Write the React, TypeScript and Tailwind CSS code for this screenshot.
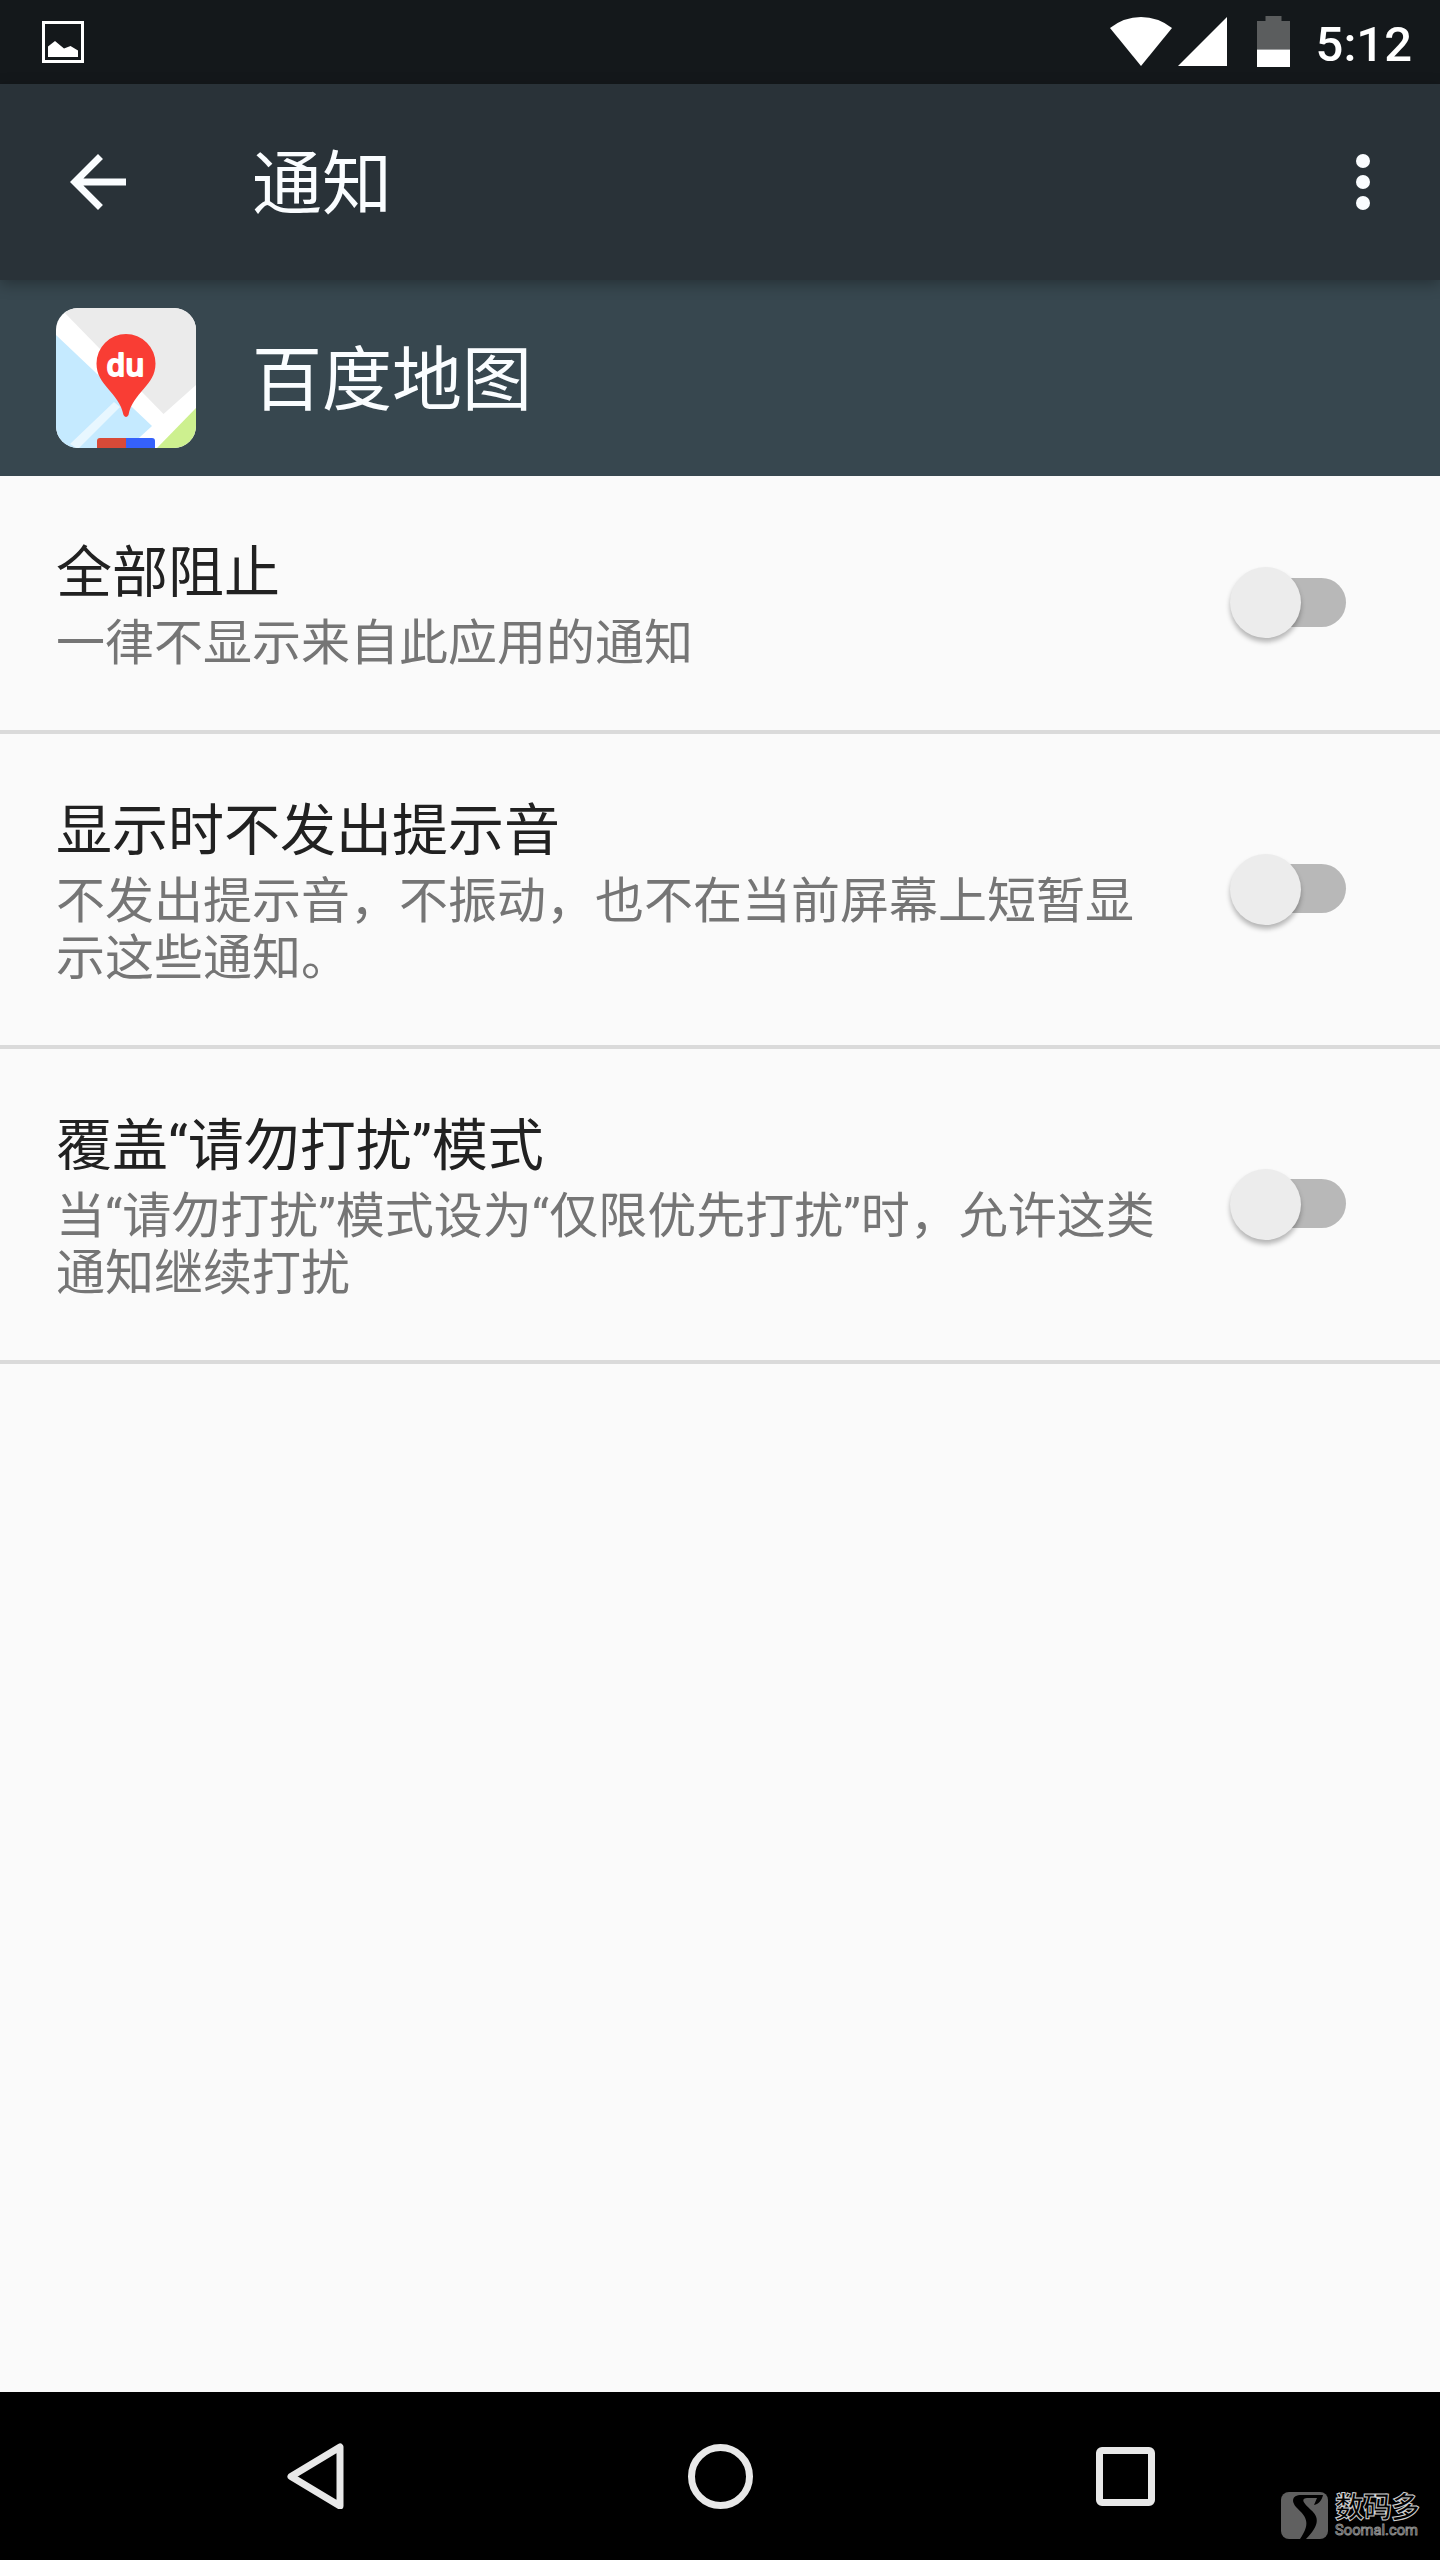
import React, { useState } from "react";

interface Setting {
  id: string;
  title: string;
  summary: string;
}

const settings: Setting[] = [{
  id: "block",
  title: "全部阻止",
  summary: "一律不显示来自此应用的通知"
}, {
  id: "silent",
  title: "显示时不发出提示音",
  summary: "不发出提示音，不振动，也不在当前屏幕上短暂显示这些通知。"
}, {
  id: "override",
  title: "覆盖“请勿打扰”模式",
  summary: "当“请勿打扰”模式设为“仅限优先打扰”时，允许这类通知继续打扰"
}];

const StatusBar: React.FC = () => {
  return <div className="flex h-[84px] shrink-0 items-start justify-between bg-[#14181b] pl-[42px] pr-7">
      <svg className="mt-[21px] h-[42px] w-[42px]" viewBox="0 0 42 42">
        <rect x="1.5" y="1.5" width="39" height="39" fill="none" stroke="#fff" strokeWidth="3" />
        <path d="M6 25.5L13 20L22 27.5L28.5 25L36 29.5V36H6z" fill="#fff" />
      </svg>
      <div className="flex items-start">
        <svg className="mt-[17px] h-[49px] w-[62px]" viewBox="0 0 62 49">
          <path d="M0 11Q14 0 31 0T62 11L31 49z" fill="#fff" />
        </svg>
        <svg className="ml-[6px] mt-[17px] h-[49px] w-[49px]" viewBox="0 0 49 49">
          <path d="M49 0V49H0z" fill="#fff" />
        </svg>
        <svg className="ml-[30px] mt-[16px] h-[51px] w-[33px]" viewBox="0 0 33 51">
          <path d="M8.5 0H24.5V5H33V33.5H0V5H8.5z" fill="#5b5d5e" />
          <rect y="33.5" width="33" height="17.5" fill="#fff" />
        </svg>
        <span className="ml-[26px] mt-[17px] text-[49px] font-medium leading-[56px] text-white">5:12</span>
      </div>
    </div>;
};

const Toolbar: React.FC = () => {
  return <header className="relative z-10 flex h-[196px] shrink-0 items-center bg-[#293238] pl-14 pr-[35px] shadow-[0_4px_14px_rgba(0,0,0,0.3)]">
      <svg className="h-[84px] w-[84px]" viewBox="0 0 24 24" fill="#fafdff">
        <path d="M20 11H7.83l5.59-5.59L12 4l-8 8 8 8 1.41-1.41L7.83 13H20v-2z" />
      </svg>
      <h1 className="ml-[112px] flex-1 pt-[6px] text-[70px] leading-[84px] text-[#fafdff]">通知</h1>
      <svg className="h-[84px] w-[84px]" viewBox="0 0 24 24" fill="#fafdff">
        <circle cx="12" cy="6" r="2" />
        <circle cx="12" cy="12" r="2" />
        <circle cx="12" cy="18" r="2" />
      </svg>
    </header>;
};

const MapIcon: React.FC = () => {
  return <svg className="h-[140px] w-[140px] rounded-[22px]" viewBox="0 0 140 140">
      <rect width="140" height="140" fill="#fff" />
      <path d="M4 0H140V77L107.5 106z" fill="#ebebeb" />
      <path d="M0 27L96 118L72 140H0z" fill="#c5eaff" />
      <path d="M58 94L14 136L22 141L64 99z" fill="#e8f7ff" />
      <path d="M140 100V140H101z" fill="#cdf08f" />
      <path d="M41 140V133Q41 130 44 130H70V140z" fill="#d84a38" />
      <path d="M70 130H96Q99 130 99 133V140H70z" fill="#3561fb" />
      <path d="M70 26A29.5 29.5 0 0 1 99.5 55.5C99.5 78 77 84 72.5 107Q70 111 67.5 107C63 84 40.5 78 40.5 55.5A29.5 29.5 0 0 1 70 26z" fill="#f93d34" />
      <text x="69.5" y="67.5" textAnchor="middle" fontSize="31" fontWeight="600" fill="#fff" stroke="#fff" strokeWidth="1.8" strokeLinejoin="round" fontFamily="Open Sans, sans-serif" textLength="38" lengthAdjust="spacingAndGlyphs">du</text>
    </svg>;
};

const Switch: React.FC<{ checked: boolean; onChange: () => void }> = ({ checked, onChange }) => {
  return <button role="switch" aria-checked={checked} onClick={onChange} className="relative -top-px mr-[94px] flex h-[70px] w-[117px] items-center">
      <span className="ml-[17px] h-[49px] w-[100px] rounded-full bg-[#b8b8b8]"></span>
      <span className={`absolute top-0 h-[71px] w-[71px] rounded-full bg-[#ececec] shadow-[0_4px_5px_rgba(0,0,0,0.28)] ${checked ? "right-0" : "left-px"}`}></span>
    </button>;
};

const NavBar: React.FC = () => {
  return <nav className="relative flex h-[168px] shrink-0 items-center bg-black pl-[287px]">
      <svg className="h-[66px] w-[58px]" viewBox="0 0 58 66">
        <path d="M4 33.5L53 4V63z" fill="none" stroke="#e8e8e8" strokeWidth="7" strokeLinejoin="round" />
      </svg>
      <div className="ml-[343px] h-[65px] w-[65px] rounded-full border-[7px] border-[#e8e8e8]"></div>
      <div className="ml-[343px] mt-px h-[59px] w-[59px] rounded-[6px] border-[7px] border-[#e8e8e8]"></div>
      <Watermark />
    </nav>;
};

const Watermark: React.FC = () => {
  return <svg className="absolute bottom-0 right-0 h-[84px] w-[160px]" viewBox="0 0 160 84">
      <rect x="1" y="16" width="47" height="47" rx="8" fill="#606060" />
      <path d="M43 19H22C10 19 12 27 17 32C25 40 32 46 20 63H26C40 49 39 41 31 34C26 29 19 23 27 22H37L34 29C39 28 42 24 43 19z" fill="#000" />
      <text x="55" y="41.5" fontSize="29" fontWeight="700" fill="#000" stroke="#d0d0d0" strokeWidth="1" textLength="85" fontFamily="Noto Sans CJK SC, sans-serif">数码多</text>
      <text x="55" y="58.5" fontSize="15.5" fill="#111" stroke="#8c8c8c" strokeWidth="1" textLength="83" lengthAdjust="spacingAndGlyphs" fontFamily="Roboto, sans-serif">Soomal.com</text>
    </svg>;
};

const App: React.FC = () => {
  const [enabled, setEnabled] = useState<Record<string, boolean>>({});
  const toggle = (id: string) => {
    setEnabled({
      ...enabled,
      [id]: !enabled[id]
    });
  };
  return <div className="flex h-[2560px] w-[1440px] flex-col overflow-hidden bg-[#fafafa] font-['Roboto','Noto_Sans_CJK_SC',sans-serif]" lang="zh-CN">
      <StatusBar />
      <Toolbar />
      <div className="flex h-[196px] shrink-0 items-center bg-[#37474f] pl-14">
        <MapIcon />
        <h2 className="ml-14 pt-[6px] text-[70px] leading-[84px] text-[#fafdff]">百度地图</h2>
      </div>
      <main className="flex-1">
        {settings.map(setting => <div key={setting.id} className="flex items-center justify-between border-b-4 border-[#dadada] pl-14">
            <div className="w-[1110px] pb-[58px] pt-[64px]">
              <h3 className="text-[56px] leading-[66px] text-[#212121]">{setting.title}</h3>
              <p className="mt-[9px] text-[49px] leading-[57px] text-[#757575]">{setting.summary}</p>
            </div>
            <Switch checked={!!enabled[setting.id]} onChange={() => toggle(setting.id)} />
          </div>)}
      </main>
      <NavBar />
    </div>;
};

export default App;
